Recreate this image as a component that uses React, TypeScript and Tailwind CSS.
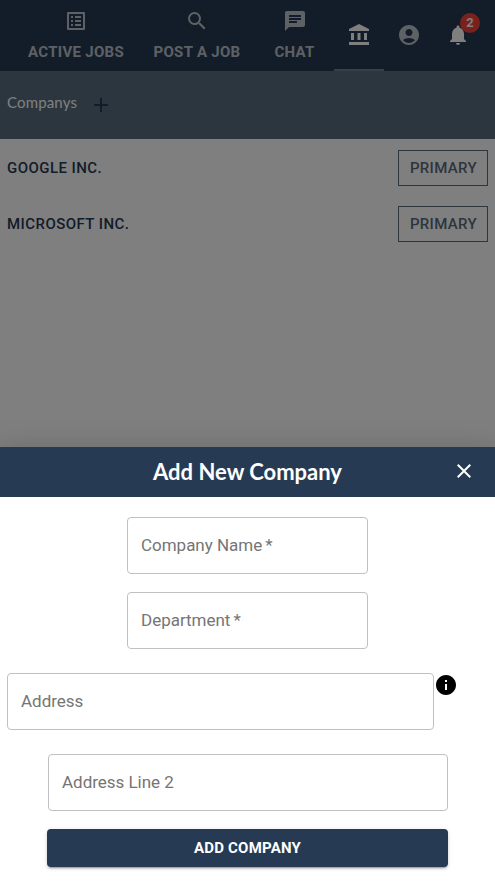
import type { ReactNode } from "react";
import {
  MdAccountBalance,
  MdAccountCircle,
  MdAdd,
  MdChat,
  MdClose,
  MdInfo,
  MdListAlt,
  MdNotifications,
  MdSearch,
} from "react-icons/md";

function LabelTab({ icon, label, width }: { icon: ReactNode; label: string; width: string }) {
  return (
    <button className={`flex shrink-0 flex-col items-center pt-[9px] text-white/70 ${width}`}>
      {icon}
      <span className="mt-[7px] text-[15px] leading-6 font-bold tracking-[0.3px] whitespace-nowrap">{label}</span>
    </button>
  );
}

function CompanyRow({ name }: { name: string }) {
  return (
    <li className="flex h-9 items-center justify-between">
      <span className="text-[15px] font-medium tracking-[0.45px] text-[#263a53]">{name}</span>
      <button className="h-9 w-[90px] border border-[#566c7e] pl-px text-[15px] font-medium tracking-[0.35px] text-[#566c7e]">
        PRIMARY
      </button>
    </li>
  );
}

function Field({ label, required, className }: { label: string; required?: boolean; className: string }) {
  return (
    <div className={`flex h-[57px] items-center rounded border border-[#c0c0c2] px-[13px] text-[17px] tracking-[-0.02px] text-[#757575] ${className}`}>
      {label}
      {required && <span className="ml-[3px]">*</span>}
    </div>
  );
}

export default function App() {
  return (
    <div className="relative flex h-[885px] w-[495px] flex-col overflow-hidden bg-white font-[Roboto,sans-serif]">
      <header className="flex h-[71px] shrink-0 bg-[#263b53] pl-[13px]">
        <LabelTab width="w-[126px]" label="ACTIVE JOBS" icon={<MdListAlt size={24} />} />
        <LabelTab width="w-[116px]" label="POST A JOB" icon={<MdSearch size={24} />} />
        <LabelTab width="w-[79px]" label="CHAT" icon={<MdChat size={24} />} />
        <button className="flex w-[50px] justify-center border-b-2 border-[#688294] pt-[23px] text-white">
          <MdAccountBalance size={24} />
        </button>
        <button className="flex w-[50px] justify-center pt-[23px] text-white/70">
          <MdAccountCircle size={24} />
        </button>
        <button className="relative flex w-12 justify-center pt-[23px] text-white">
          <MdNotifications size={24} />
          <span className="absolute top-[13px] left-[26px] flex size-5 items-center justify-center rounded-full bg-[#f44336] text-[13px] font-bold">
            2
          </span>
        </button>
      </header>
      <div className="flex h-[68px] shrink-0 items-center bg-[#566c7e] pl-[7px] text-[#263b53]">
        <h1 className="w-[82px] pb-1.5 font-[Lato,sans-serif] text-[15px] tracking-[0.15px] text-white">Companys</h1>
        <MdAdd size={24} />
      </div>
      <ul className="flex flex-col gap-5 px-[7px] pt-[11px]">
        <CompanyRow name="GOOGLE INC." />
        <CompanyRow name="MICROSOFT INC." />
      </ul>

      <div className="absolute inset-0 flex flex-col justify-end bg-black/50">
        <section className="flex h-[438px] flex-col bg-white shadow-[0_8px_10px_-5px_rgba(0,0,0,0.2),0_16px_24px_2px_rgba(0,0,0,0.14),0_6px_30px_5px_rgba(0,0,0,0.12)]">
          <div className="grid h-[50px] shrink-0 grid-cols-[1fr_auto_1fr] items-center bg-[#263b53] pr-[19px] text-white">
            <h2 className="col-start-2 pb-0.5 pl-[19px] font-[Lato,sans-serif] text-[22px] font-bold">Add New Company</h2>
            <button className="mb-0.5 justify-self-end">
              <MdClose size={24} />
            </button>
          </div>
          <form className="flex flex-col pt-5">
            <Field label="Company Name" required className="ml-[127px] w-[241px]" />
            <Field label="Department" required className="mt-[18px] ml-[127px] w-[241px]" />
            <div className="mt-6 flex pl-[7px]">
              <Field label="Address" className="w-[427px]" />
              <MdInfo size={24} />
            </div>
            <Field label="Address Line 2" className="mt-6 ml-12 w-[400px]" />
            <button
              type="button"
              className="mt-[18px] ml-[47px] h-[38px] w-[401px] rounded bg-[#263b53] text-[15px] font-bold tracking-[0.22px] text-white shadow-[0_3px_1px_-2px_rgba(0,0,0,0.2),0_2px_2px_0_rgba(0,0,0,0.14),0_1px_5px_0_rgba(0,0,0,0.12)]"
            >
              ADD COMPANY
            </button>
          </form>
        </section>
      </div>
    </div>
  );
}
